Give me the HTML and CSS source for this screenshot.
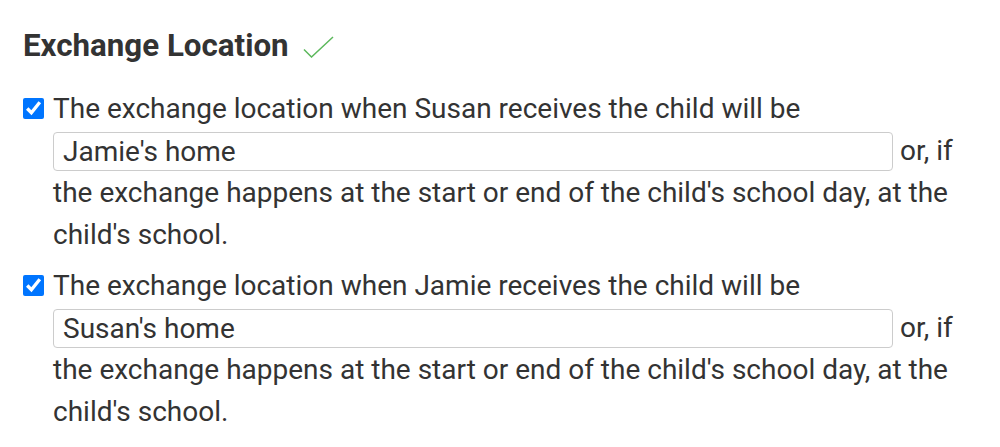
FILE: index.html
```html
<!DOCTYPE html>
<html lang="en">

<head>
    <meta charset="UTF-8">
    <meta name="viewport" content="width=device-width, initial-scale=1.0">
    <title>Exchange Location</title>
    <link rel="stylesheet" href="styles.css">
</head>

<body>

    <h2 class="section-title">
        Exchange Location
        <svg class="done-mark" width="31" height="22" viewBox="0 0 31 22">
            <path d="M1 13.5 L8.5 21 L30 1" fill="none" stroke="#5cb85c" stroke-width="1.5"/>
        </svg>
    </h2>

    <div class="option">
        <input type="checkbox" class="option-check" checked>
        <div class="option-text">
            The exchange location when Susan receives the child will be
            <input type="text" class="place-input" value="Jamie's home">
            or, if the exchange happens at the start or end of the child's school day, at the child's school.
        </div>
    </div>

    <div class="option">
        <input type="checkbox" class="option-check" checked>
        <div class="option-text">
            The exchange location when Jamie receives the child will be
            <input type="text" class="place-input" value="Susan's home">
            or, if the exchange happens at the start or end of the child's school day, at the child's school.
        </div>
    </div>

</body>

</html>
```

FILE: styles.css
```css
body {
    font-family: Roboto, "Liberation Sans", sans-serif;
    margin: 0;
    padding: 20px 23px;
    color: #333;
    background-color: #fff;
}

.section-title {
    font-size: 31.3px;
    font-weight: bold;
    margin: 6px 0 22px;
    display: flex;
    align-items: center;
    gap: 14px;
    line-height: 40px;
}

.done-mark {
    display: block;
    margin-top: 2px;
}

.option {
    display: flex;
    gap: 9px;
    font-size: 28px;
    line-height: 42px;
    margin-bottom: 9px;
}

.option-check {
    width: 21px;
    height: 21px;
    margin: 10px 0 0;
    flex-shrink: 0;
}

.option-text {
    flex: 1;
}

.place-input {
    font-family: inherit;
    font-size: 28px;
    color: #333;
    width: 840px;
    height: 39px;
    box-sizing: border-box;
    padding: 0 9px;
    margin-top: 2px;
    border: 1px solid #ccc;
    border-radius: 4px;
    vertical-align: top;
}
```
